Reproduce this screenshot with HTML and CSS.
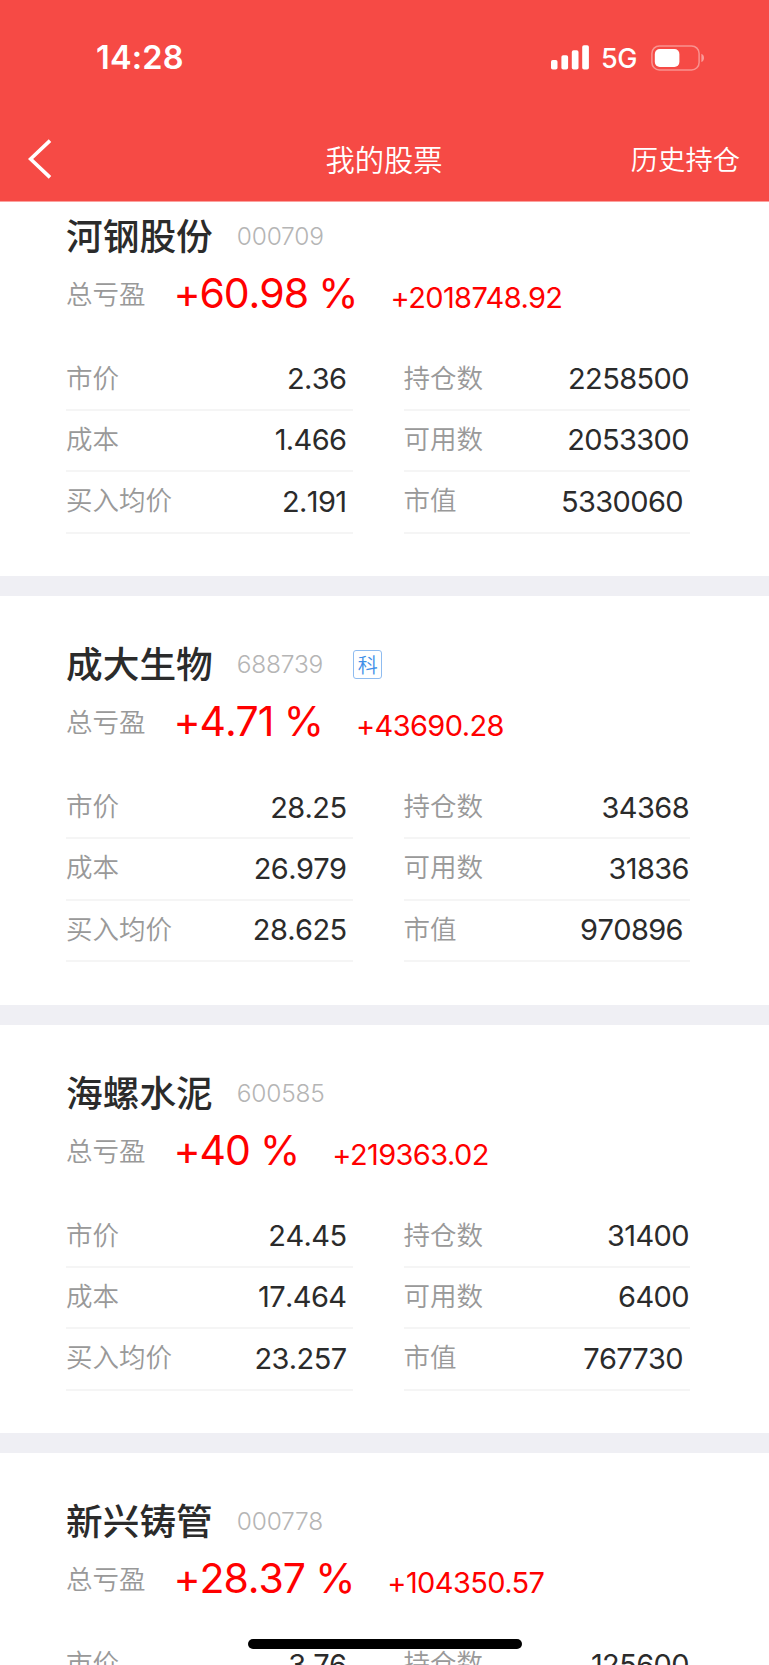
FILE: index.html
```
<!DOCTYPE html>
<html lang="zh-CN">
<head>
    <meta charset="UTF-8">
    <meta name="viewport" content="width=device-width, initial-scale=1.0">
    <title>我的股票</title>
    <link rel="stylesheet" href="styles.css">
</head>
<body>
    <header class="header">
        <div class="status-bar">
            <span class="time">14:28</span>
            <div class="status-icons">
                <svg class="signal" width="38" height="25" viewBox="0 0 38 25" fill="#fff">
                    <rect x="0" y="15" width="6.5" height="9.5" rx="1.8"/>
                    <rect x="10.4" y="10.3" width="6.7" height="14.2" rx="1.8"/>
                    <rect x="20.8" y="5.2" width="6.7" height="19.3" rx="1.8"/>
                    <rect x="31.2" y="0.2" width="6.7" height="24.3" rx="1.8"/>
                </svg>
                <span class="network">5G</span>
                <svg class="battery" width="54" height="26" viewBox="0 0 54 26">
                    <rect x="0.9" y="0.9" width="47.2" height="24" rx="7.5" fill="none" stroke="#fff" stroke-opacity="0.4" stroke-width="1.5"/>
                    <rect x="3.8" y="4" width="24.6" height="18" rx="5" fill="#fff"/>
                    <path d="M50.4 8.8c1.6.7 2.6 2.2 2.6 4.1s-1 3.4-2.6 4.1z" fill="#fff" fill-opacity="0.45"/>
                </svg>
            </div>
        </div>
        <nav class="nav">
            <svg class="back" width="24" height="40" viewBox="0 0 24 40">
                <path d="M22 1.6L2.6 20L22 38.4" fill="none" stroke="#fff" stroke-width="3.6"/>
            </svg>
            <h1>我的股票</h1>
            <a class="history">历史持仓</a>
        </nav>
    </header>

    <main class="list">
        <section class="stock">
            <div class="stock-title"><h2>河钢股份</h2><span class="code">000709</span></div>
            <div class="profit"><span class="label">总亏盈</span><span class="percent">+60.98 %</span><span class="amount">+2018748.92</span></div>
            <div class="details">
                <div class="row"><span class="label">市价</span><span class="value">2.36</span></div>
                <div class="row"><span class="label">持仓数</span><span class="value">2258500</span></div>
                <div class="row"><span class="label">成本</span><span class="value">1.466</span></div>
                <div class="row"><span class="label">可用数</span><span class="value">2053300</span></div>
                <div class="row"><span class="label">买入均价</span><span class="value">2.191</span></div>
                <div class="row total"><span class="label">市值</span><span class="value">5330060</span></div>
            </div>
        </section>

        <section class="stock">
            <div class="stock-title"><h2>成大生物</h2><span class="code">688739</span><span class="tag">科</span></div>
            <div class="profit"><span class="label">总亏盈</span><span class="percent">+4.71 %</span><span class="amount">+43690.28</span></div>
            <div class="details">
                <div class="row"><span class="label">市价</span><span class="value">28.25</span></div>
                <div class="row"><span class="label">持仓数</span><span class="value">34368</span></div>
                <div class="row"><span class="label">成本</span><span class="value">26.979</span></div>
                <div class="row"><span class="label">可用数</span><span class="value">31836</span></div>
                <div class="row"><span class="label">买入均价</span><span class="value">28.625</span></div>
                <div class="row total"><span class="label">市值</span><span class="value">970896</span></div>
            </div>
        </section>

        <section class="stock">
            <div class="stock-title"><h2>海螺水泥</h2><span class="code">600585</span></div>
            <div class="profit"><span class="label">总亏盈</span><span class="percent">+40 %</span><span class="amount">+219363.02</span></div>
            <div class="details">
                <div class="row"><span class="label">市价</span><span class="value">24.45</span></div>
                <div class="row"><span class="label">持仓数</span><span class="value">31400</span></div>
                <div class="row"><span class="label">成本</span><span class="value">17.464</span></div>
                <div class="row"><span class="label">可用数</span><span class="value">6400</span></div>
                <div class="row"><span class="label">买入均价</span><span class="value">23.257</span></div>
                <div class="row total"><span class="label">市值</span><span class="value">767730</span></div>
            </div>
        </section>

        <section class="stock">
            <div class="stock-title"><h2>新兴铸管</h2><span class="code">000778</span></div>
            <div class="profit"><span class="label">总亏盈</span><span class="percent">+28.37 %</span><span class="amount">+104350.57</span></div>
            <div class="details">
                <div class="row"><span class="label">市价</span><span class="value">3.76</span></div>
                <div class="row"><span class="label">持仓数</span><span class="value">125600</span></div>
            </div>
        </section>
    </main>

    <div class="home-indicator"></div>
</body>
</html>
```
FILE: styles.css
```
* {
    box-sizing: border-box;
}
body {
    margin: 0;
    height: 1665px;
    overflow: hidden;
    position: relative;
    background: #fff;
    color: #2b2b2b;
    font-family: Inter, "Noto Sans CJK SC", sans-serif;
}
h1, h2 {
    margin: 0;
}

/* header */
.header {
    position: relative;
    z-index: 1;
    height: 202px;
    background: #f64a45;
    border-bottom: 1px solid #fba19e;
    background-clip: padding-box;
    color: #fff;
}
.status-bar {
    display: flex;
    justify-content: space-between;
    align-items: center;
    height: 115px;
    padding: 0 64px 0 96px;
}
.time {
    font-size: 32.5px;
    font-weight: 600;
    letter-spacing: 0.2px;
}
.status-icons {
    display: flex;
    align-items: center;
}
.network {
    margin: 2px 14px 0 12px;
    font-size: 27px;
    font-weight: 500;
    letter-spacing: -0.4px;
}
.nav {
    display: grid;
    grid-template-columns: 1fr auto 1fr;
    align-items: center;
    height: 87px;
    padding: 0 29px 0 28px;
}
.nav h1 {
    padding-bottom: 2px;
    font-size: 29.3px;
    font-weight: 350;
}
.history {
    justify-self: end;
    padding-bottom: 2px;
    font-size: 27.3px;
    font-weight: 350;
}

/* stock cards */
.list {
    margin-top: -34.2px;
}
.stock {
    height: 428.5px;
    padding: 39px 79px 0 66px;
    border-bottom: 20.6px solid #efeff4;
}
.stock-title {
    display: flex;
    align-items: center;
    height: 54px;
}
.stock-title h2 {
    font-size: 36.7px;
    font-weight: 500;
}
.code {
    margin: 4px 0 0 24px;
    color: #b5b5b5;
    font-size: 24.5px;
    font-weight: 300;
    letter-spacing: -0.2px;
}
.tag {
    display: flex;
    align-items: center;
    justify-content: center;
    width: 29px;
    height: 29px;
    margin: 5px 0 0 30px;
    padding-bottom: 1px;
    border: 1px solid #8fbcf0;
    border-radius: 3px;
    color: #3f8fe8;
    font-size: 20px;
    font-weight: 350;
}
.profit {
    display: flex;
    align-items: center;
    height: 64px;
    color: #ff0000;
}
.label {
    padding-bottom: 1px;
    color: #999;
    font-size: 26.5px;
    font-weight: 350;
}
.percent {
    margin-left: 28px;
    font-size: 41px;
    font-kerning: none;
    letter-spacing: -1.1px;
}
.amount {
    margin: 9px 0 0 33px;
    font-size: 29px;
    letter-spacing: -0.6px;
}
.details {
    display: grid;
    grid-template-columns: 1fr 1fr;
    column-gap: 51px;
    margin-top: 24.6px;
}
.row {
    display: flex;
    justify-content: space-between;
    align-items: center;
    height: 61.4px;
    padding-bottom: 3px;
    border-bottom: 2px solid #f5f5f5;
}
.row .label {
    padding-bottom: 3px;
}
.value {
    padding: 2px 6px 0 0;
    font-size: 29px;
    font-kerning: none;
    letter-spacing: -0.6px;
}
.row:nth-child(even) .value {
    padding-right: 1px;
}
.row.total .value {
    padding-right: 7px;
}

.home-indicator {
    position: absolute;
    z-index: 2;
    left: 247.5px;
    bottom: 16px;
    width: 274px;
    height: 10px;
    border-radius: 5px;
    background: #000;
}
```
